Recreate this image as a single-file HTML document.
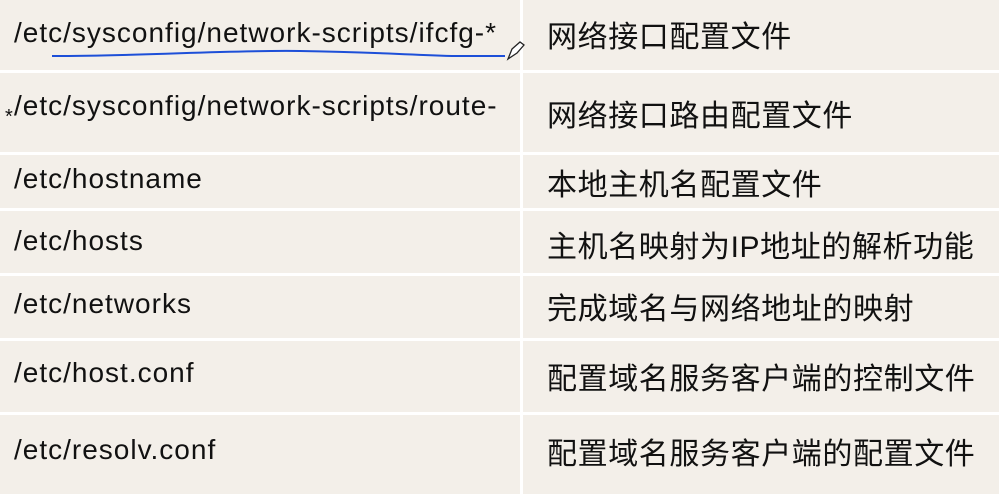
<!DOCTYPE html>
<html><head><meta charset="utf-8"><style>
body{margin:0;width:1005px;height:494px;background:#fff;position:relative;overflow:hidden}
.bg{position:absolute;left:0;top:0;width:999px;height:494px;background:#f3efe9}
.h{position:absolute;left:0;width:999px;height:3px;background:#fff}
.v{position:absolute;left:520px;top:0;width:3px;height:494px;background:#fff}
.l,.r{position:absolute;white-space:nowrap;color:#111;line-height:1}
.l{left:14px;font:28px "Liberation Sans",sans-serif;letter-spacing:1px}
.r{left:547px;font:30px "Liberation Sans","Noto Sans CJK SC",sans-serif;letter-spacing:0.6px}
</style></head><body>
<div class="bg"></div>
<div class="h" style="top:70px"></div>
<div class="h" style="top:152px"></div>
<div class="h" style="top:208px"></div>
<div class="h" style="top:273px"></div>
<div class="h" style="top:338px"></div>
<div class="h" style="top:412px"></div>
<div class="v"></div>
<div class="l" style="top:17px">/etc/sysconfig/network-scripts/ifcfg-*</div>
<svg style="position:absolute;left:0;top:0" width="530" height="70"><path d="M52 56 C150 56 220 50 300 51 C370 52 390 54 452 56 L505 56" stroke="#1d4fd8" stroke-width="2" fill="none"/><path d="M508 59 L512 49 L520 42 L524 45 L517 53 Z" stroke="#222" stroke-width="1.3" fill="#fff"/></svg>
<div class="l" style="top:90px">/etc/sysconfig/network-scripts/route-</div>
<div class="l" style="top:106px;left:5px;font-size:20px">*</div>
<div class="l" style="top:163px">/etc/hostname</div>
<div class="l" style="top:225px">/etc/hosts</div>
<div class="l" style="top:288px">/etc/networks</div>
<div class="l" style="top:357px">/etc/host.conf</div>
<div class="l" style="top:434px">/etc/resolv.conf</div>
<div class="r" style="top:12px">网络接口配置文件</div>
<div class="r" style="top:91px">网络接口路由配置文件</div>
<div class="r" style="top:160px">本地主机名配置文件</div>
<div class="r" style="top:222px">主机名映射为IP地址的解析功能</div>
<div class="r" style="top:284px">完成域名与网络地址的映射</div>
<div class="r" style="top:354px">配置域名服务客户端的控制文件</div>
<div class="r" style="top:429px">配置域名服务客户端的配置文件</div>
</body></html>
